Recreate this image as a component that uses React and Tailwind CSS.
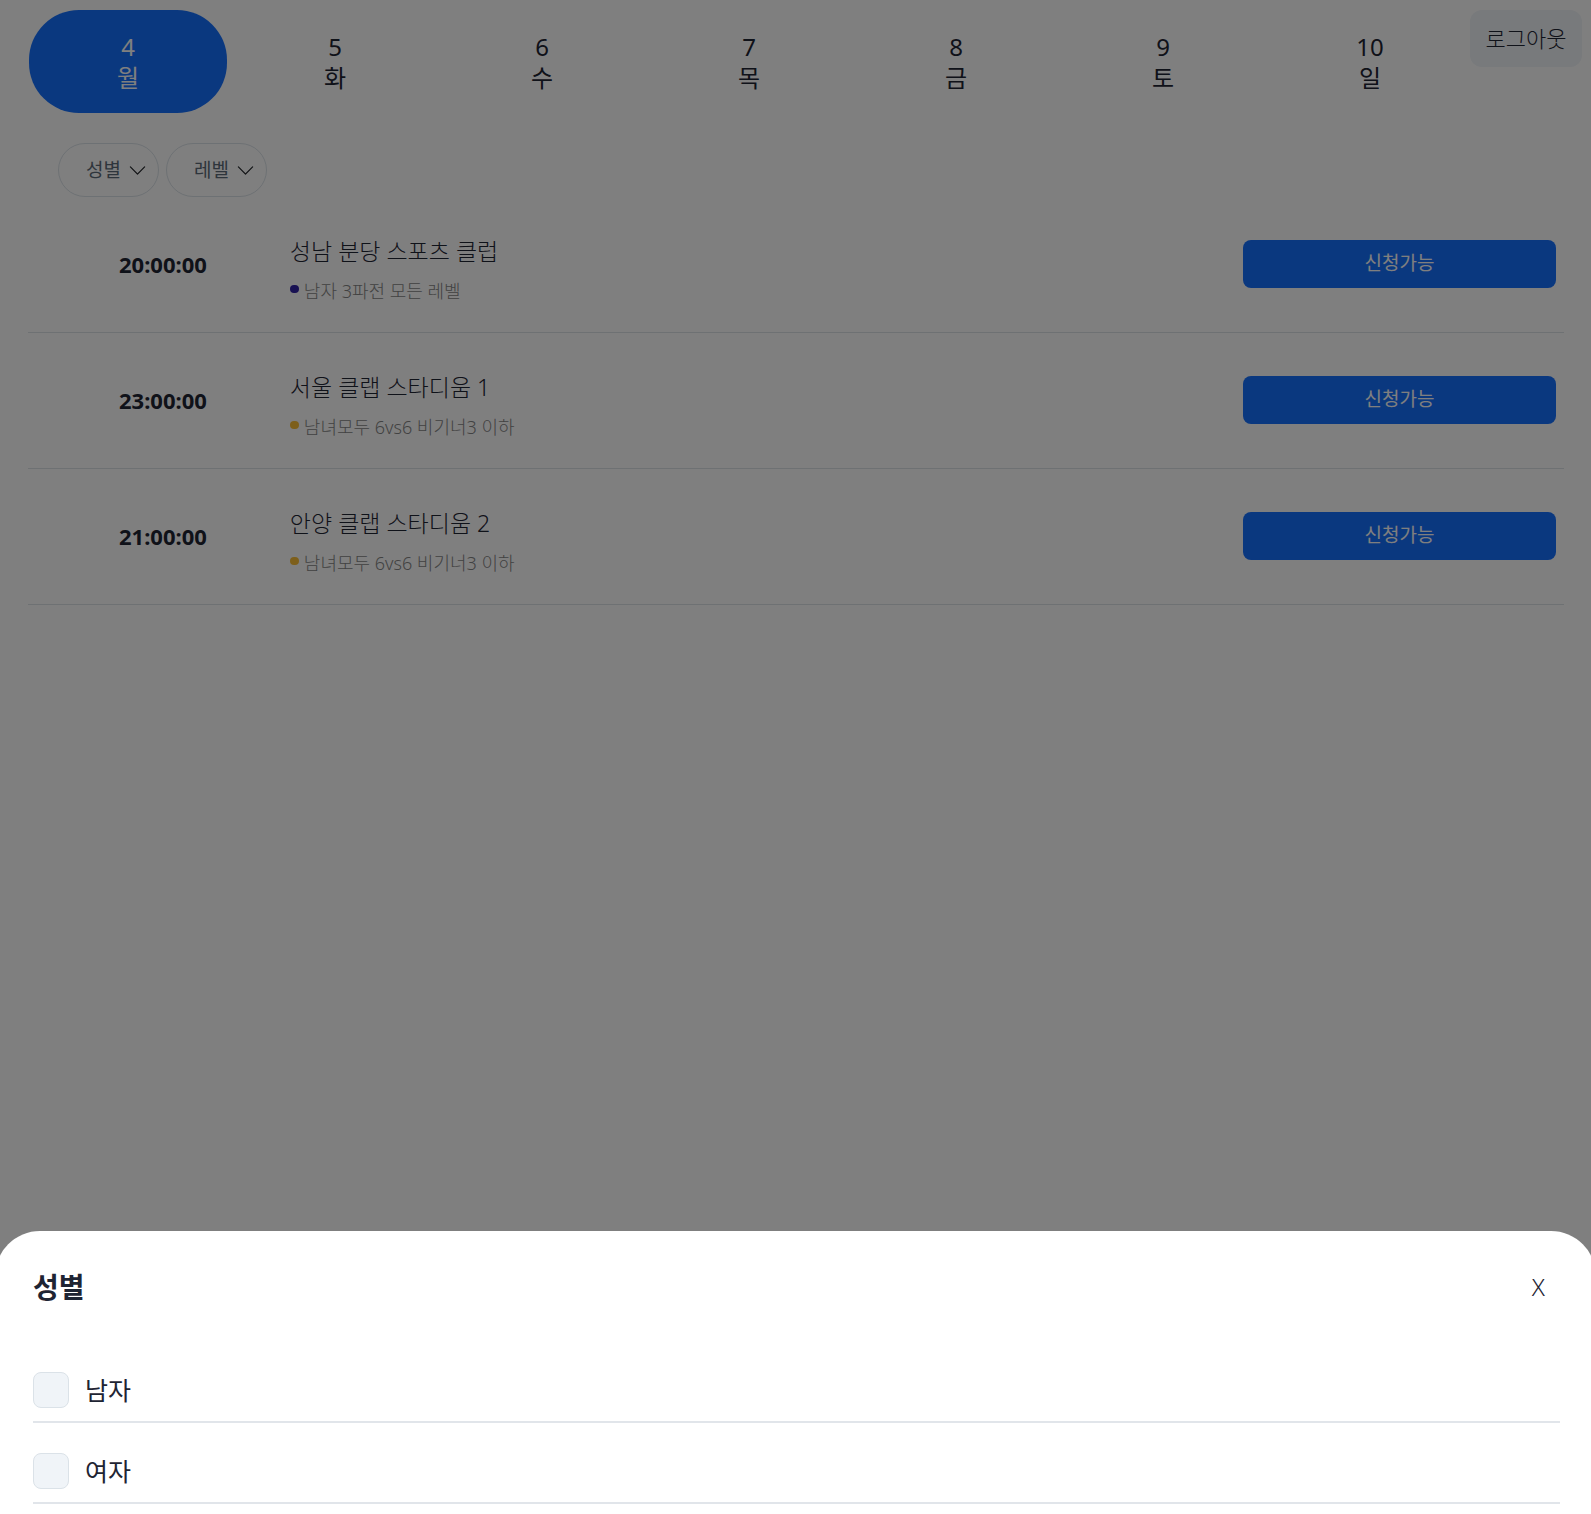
import React from "react";

const days = [
  { date: 4, day: "월" },
  { date: 5, day: "화" },
  { date: 6, day: "수" },
  { date: 7, day: "목" },
  { date: 8, day: "금" },
  { date: 9, day: "토" },
  { date: 10, day: "일" },
];

const matches = [
  { time: "20:00:00", place: "성남 분당 스포츠 클럽", info: "남자 3파전 모든 레벨", dot: "bg-[#3224a6]" },
  { time: "23:00:00", place: "서울 클랩 스타디움 1", info: "남녀모두 6vs6 비기너3 이하", dot: "bg-[#fbbf36]" },
  { time: "21:00:00", place: "안양 클랩 스타디움 2", info: "남녀모두 6vs6 비기너3 이하", dot: "bg-[#fbbf36]" },
];

function Chevron() {
  return (
    <svg width="19" height="19" viewBox="0 0 16 16" fill="#212529" aria-hidden="true">
      <path
        fillRule="evenodd"
        d="M1.646 4.646a.5.5 0 0 1 .708 0L8 10.293l5.646-5.647a.5.5 0 0 1 .708.708l-6 6a.5.5 0 0 1-.708 0l-6-6a.5.5 0 0 1 0-.708z"
      />
    </svg>
  );
}

function DayPicker() {
  return (
    <nav className="grid flex-1 grid-cols-7 gap-[9px]">
      {days.map(({ date, day }, i) => (
        <button
          key={date}
          type="button"
          className={
            i === 0
              ? "flex h-[103px] flex-col items-center justify-center rounded-[50px] bg-[#1570ff] text-2xl leading-[31px] text-white"
              : "flex h-[103px] flex-col items-center justify-center rounded-[50px] text-2xl leading-[31px]"
          }
        >
          <span>{date}</span>
          <span>{day}</span>
        </button>
      ))}
    </nav>
  );
}

function MatchRow({ time, place, info, dot }) {
  return (
    <li className="grid h-[136px] grid-cols-[16.7%_1fr_20.6%] items-center border-b border-[#dde2e6] px-2">
      <time className="text-center text-[22px] font-bold">{time}</time>
      <div className="flex flex-col gap-2 pt-3">
        <h2 className="text-[23px] leading-8 font-light">{place}</h2>
        <p className="flex items-center gap-[5px] text-[18px] leading-8 font-light text-[#858585]">
          <span className={`mb-1 h-2 w-[9px] rounded-full ${dot}`} />
          {info}
        </p>
      </div>
      <button type="button" className="mb-[2px] h-12 rounded-lg bg-[#1570ff] text-[19px] text-white">
        신청가능
      </button>
    </li>
  );
}

function GenderSheet() {
  return (
    <div className="fixed inset-0 flex flex-col justify-end overflow-hidden bg-black/50">
      <section
        role="dialog"
        aria-labelledby="sheet-title"
        className="-mx-[5px] rounded-t-[45px] bg-white pt-9 pr-9 pb-[10px] pl-[38px]"
      >
        <header className="flex h-10 items-center justify-between pr-[15px]">
          <h2 id="sheet-title" className="text-[28px] font-bold">
            성별
          </h2>
          <button type="button" className="text-2xl font-light">
            X
          </button>
        </header>
        <div className="mt-[35px]">
          {["남자", "여자"].map((label) => (
            <label
              key={label}
              className="flex h-[81px] items-end gap-4 border-b-2 border-[#e1e5ea] pb-[13px] text-[25px] leading-9"
            >
              <input
                type="checkbox"
                className="size-9 appearance-none rounded-lg border border-[#dbe2e8] bg-[#f0f4f8] checked:bg-[#1570ff]"
              />
              {label}
            </label>
          ))}
        </div>
      </section>
    </div>
  );
}

export default function App() {
  return (
    <div className="min-h-screen bg-white font-['Noto_Sans','Noto_Sans_CJK_KR',sans-serif] text-[#1e2433]">
      <header className="flex items-start gap-px pt-[10px] pr-[9px] pl-[29px]">
        <DayPicker />
        <button type="button" className="h-[57px] w-28 rounded-xl bg-[#f0f4f8] text-[22px] font-light">
          로그아웃
        </button>
      </header>
      <div className="mt-[30px] flex gap-[7px] pl-[58px]">
        {["성별", "레벨"].map((label) => (
          <button
            key={label}
            type="button"
            className="flex h-[54px] w-[101px] items-center justify-end gap-[7px] rounded-full border border-[#dbe2e8] pr-[11px] text-[19px] text-[#5d6b78]"
          >
            {label}
            <Chevron />
          </button>
        ))}
      </div>
      <ul className="mr-[27px] ml-7">
        {matches.map((match) => (
          <MatchRow key={match.time} {...match} />
        ))}
      </ul>
      <GenderSheet />
    </div>
  );
}
